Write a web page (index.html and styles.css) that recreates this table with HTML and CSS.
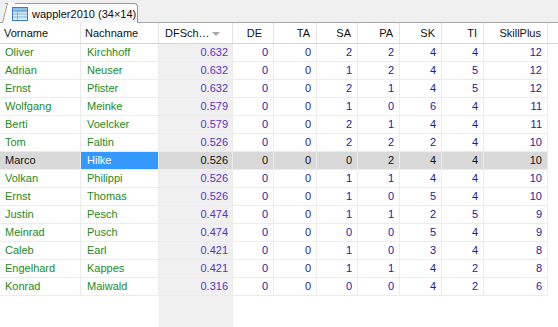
FILE: index.html
```html
<!DOCTYPE html>
<html>
<head>
<meta charset="utf-8">
<link rel="stylesheet" href="styles.css">
</head>
<body>
<div class="app">
  <div class="tabstrip">
    <div class="tab">
      <svg class="tab-icon" width="16" height="14" viewBox="0 0 16 14">
        <rect x="0.5" y="0.5" width="15" height="13" fill="#d8ecfb" stroke="#3a7cc4"/>
        <rect x="1" y="1" width="14" height="2.5" fill="#8fc0ec"/>
        <line x1="1" y1="4" x2="15" y2="4" stroke="#3a7cc4"/>
        <line x1="1" y1="7" x2="15" y2="7" stroke="#7fb0e0"/>
        <line x1="1" y1="10" x2="15" y2="10" stroke="#7fb0e0"/>
        <line x1="5.5" y1="4" x2="5.5" y2="13" stroke="#7fb0e0"/>
      </svg>
      <span class="tab-label">wappler2010 (34×14)</span>
    </div>
  </div>
  <div class="grid">
    <div class="row head">
      <div class="c l">Vorname</div>
      <div class="c l">Nachname</div>
      <div class="c l sorthead">DFSch…<span class="arrow"></span></div>
      <div class="c r de">DE</div>
      <div class="c r">TA</div>
      <div class="c r">SA</div>
      <div class="c r">PA</div>
      <div class="c r">SK</div>
      <div class="c r">TI</div>
      <div class="c r">SkillPlus</div>
      <div class="c last"></div>
    </div>
    <div id="rows"></div>
    <div class="row filler">
      <div></div><div></div><div class="sortcol"></div><div></div><div></div><div></div><div></div><div></div><div></div><div></div><div></div>
    </div>
  </div>
</div>
<script>
const data = [
  ["Oliver","Kirchhoff","0.632",0,0,2,2,4,4,12],
  ["Adrian","Neuser","0.632",0,0,1,2,4,5,12],
  ["Ernst","Pfister","0.632",0,0,2,1,4,5,12],
  ["Wolfgang","Meinke","0.579",0,0,1,0,6,4,11],
  ["Berti","Voelcker","0.579",0,0,2,1,4,4,11],
  ["Tom","Faltin","0.526",0,0,2,2,2,4,10],
  ["Marco","Hilke","0.526",0,0,0,2,4,4,10],
  ["Volkan","Philippi","0.526",0,0,1,1,4,4,10],
  ["Ernst","Thomas","0.526",0,0,1,0,5,4,10],
  ["Justin","Pesch","0.474",0,0,1,1,2,5,9],
  ["Meinrad","Pusch","0.474",0,0,0,0,5,4,9],
  ["Caleb","Earl","0.421",0,0,1,0,3,4,8],
  ["Engelhard","Kappes","0.421",0,0,1,1,4,2,8],
  ["Konrad","Maiwald","0.316",0,0,0,0,4,2,6]
];
const host = document.getElementById('rows');
data.forEach((d, i) => {
  const row = document.createElement('div');
  row.className = 'row data' + (i === 6 ? ' selected' : '');
  let html = '<div class="c l name">' + d[0] + '</div>' +
             '<div class="c l name' + (i === 6 ? ' cur' : '') + '">' + d[1] + '</div>' +
             '<div class="c r dbl sortcol">' + d[2] + '</div>';
  for (let k = 3; k < 10; k++) html += '<div class="c r num">' + d[k] + '</div>';
  html += '<div class="c last"></div>';
  row.innerHTML = html;
  host.appendChild(row);
});
</script>
</body>
</html>
```

FILE: styles.css
```css
* { box-sizing: border-box; }
html, body { margin: 0; padding: 0; height: 100%; }
body {
  font-family: "Liberation Sans", Arial, sans-serif;
  font-size: 11px;
  color: #000;
  background: #fff;
}
.app {
  width: 558px;
  height: 327px;
  display: flex;
  flex-direction: column;
  overflow: hidden;
}
.tabstrip {
  height: 23px;
  background: #f0f0f0;
  border-bottom: 1px solid #a7a7a7;
  padding-left: 5px;
  display: flex;
  align-items: flex-end;
  flex: none;
}
.tab {
  position: relative;
  height: 20px;
  margin-bottom: -1px;
  width: 133px;
  background: linear-gradient(#fdfdfd, #f6f6f6);
  border-top: 1px solid #9a9a9a;
  border-right: 1px solid #9a9a9a;
  border-top-right-radius: 4px;
  display: flex;
  align-items: center;
  padding-left: 7px;
  gap: 4px;
  white-space: nowrap;
}
.tab::before {
  content: "";
  position: absolute;
  left: -3px;
  top: -1px;
  width: 7px;
  height: 20px;
  border-left: 1px solid #9a9a9a;
  background: #fbfbfb;
  transform: skewX(-14deg);
  transform-origin: bottom left;
  z-index: 0;
}
.tab-icon { position: relative; z-index: 1; flex: none; }
.tab-label { position: relative; z-index: 1; color: #111; }

.grid {
  flex: 1;
  display: flex;
  flex-direction: column;
}
.row {
  display: grid;
  grid-template-columns: 81px 78px 74px 41px 43px 41px 42px 42px 42px 64px 10px;
}
.row.head {
  height: 21px;
  background: #fff;
  border-bottom: 1px solid #d5d5d5;
  flex: none;
}
.row.head .c {
  border-right: 1px solid #e4e4e4;
  line-height: 20px;
  color: #111;
}
.row.head .c.l { padding-left: 4px; }
.row.head .c.r { padding-right: 6px; }
.row.head .c.de { padding-right: 11px; }
.row.head .c.last { border-right: none; }
.sorthead { position: relative; padding-left: 6px !important; }
.arrow {
  position: absolute;
  left: 53px;
  top: 9px;
  width: 0;
  height: 0;
  border-left: 4px solid transparent;
  border-right: 4px solid transparent;
  border-top: 4px solid #a8a8a8;
}
.row.data { height: 18px; }
.row.data .c {
  height: 18px;
  line-height: 17px;
  border-right: 1px solid #ececec;
  border-bottom: 1px solid #ececec;
  white-space: nowrap;
  overflow: hidden;
}
.row.data .c.last { border-right: none; border-bottom: none; }
.c.l { padding-left: 5px; }
.c.r { text-align: right; padding-right: 5px; }
.row.data .c.l:nth-child(2) { padding-left: 6px; }
.name { color: #238a23; }
.dbl { color: #5a32c8; padding-right: 4px !important; }
.num { color: #1c1c9c; }
.sortcol { background: #f0f0f0; }
.row.selected .c { background: #d9d9d9; color: #111; }
.row.selected .c.last { background: #fff; }
.row.selected .c.cur { background: #3399ff; color: #fff; }
.row.filler { flex: 1; }
```
